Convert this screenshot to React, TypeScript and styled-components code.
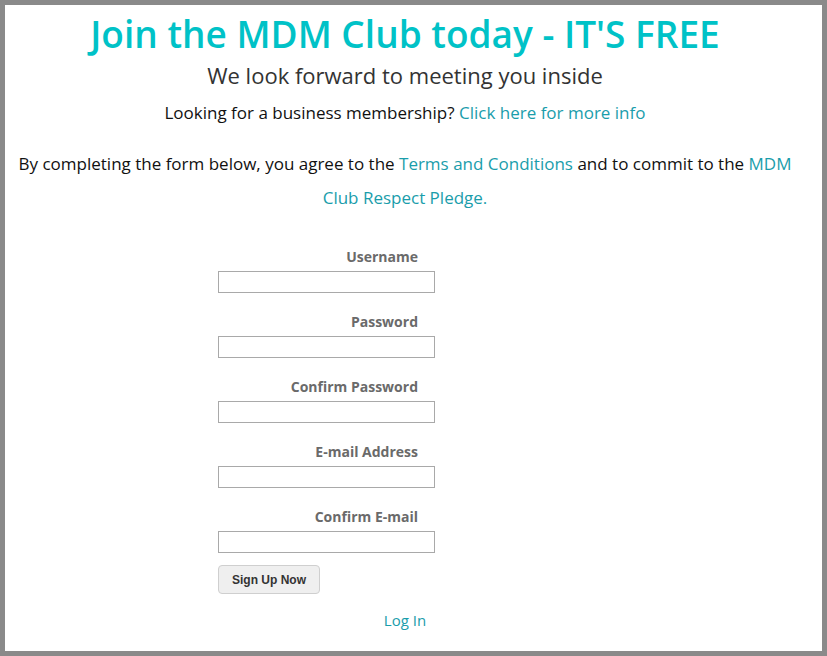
import React from "react";
import styled, { createGlobalStyle } from "styled-components";

const GlobalStyle = createGlobalStyle`
  html, body {
    margin: 0;
    padding: 0;
    background: #ffffff;
  }
  body {
    font-family: "Open Sans", "Liberation Sans", sans-serif;
  }
`;

const Frame = styled.div`
  box-sizing: border-box;
  width: 827px;
  height: 656px;
  border: 5px solid #8a8a8a;
  padding-right: 17px;
  background: #ffffff;
  overflow: hidden;
`;

const Header = styled.div`
  text-align: center;
`;

const Title = styled.h1`
  margin: 7px 0 0;
  font-size: 37px;
  line-height: 44px;
  font-weight: 600;
  color: #00c2c7;
`;

const Subtitle = styled.h2`
  margin: 4px 0 0;
  font-size: 22px;
  line-height: 30px;
  font-weight: 400;
  color: #333333;
`;

const Line = styled.p<{ $top: number }>`
  margin: ${(p) => p.$top}px 0 0;
  font-size: 17px;
  line-height: 34px;
  color: #111111;
`;

const Link = styled.a`
  color: #1a9dab;
  text-decoration: none;
`;

const Form = styled.form`
  display: flex;
  flex-direction: column;
  margin: 33px 0 0 213px;
  width: 217px;
`;

const Field = styled.div`
  display: flex;
  flex-direction: column;
  margin-bottom: 20px;
`;

const Label = styled.label`
  text-align: right;
  padding-right: 17px;
  font-size: 14px;
  line-height: 18px;
  font-weight: 700;
  color: #6a6a6a;
  margin-bottom: 5px;
`;

const Input = styled.input`
  box-sizing: border-box;
  width: 217px;
  height: 22px;
  margin: 0;
  border: 1px solid #a9a9a9;
  border-radius: 0;
  padding: 0 4px;
  background: #ffffff;
  outline: none;
`;

const Button = styled.button`
  align-self: flex-start;
  box-sizing: border-box;
  width: 102px;
  height: 29px;
  margin-top: -8px;
  border: 1px solid #cfcfcf;
  border-radius: 4px;
  background: #efefef;
  font-family: "Liberation Sans", Arial, sans-serif;
  font-size: 12px;
  font-weight: 700;
  color: #333333;
  padding: 0;
`;

const LoginRow = styled.div`
  margin-top: 16px;
  text-align: center;
  font-size: 15px;
  line-height: 20px;
`;

const fields = [
  { label: "Username", type: "text" },
  { label: "Password", type: "password" },
  { label: "Confirm Password", type: "password" },
  { label: "E-mail Address", type: "email" },
  { label: "Confirm E-mail", type: "email" },
];

const App: React.FC = () => {
  return (
    <>
      <GlobalStyle />
      <Frame>
        <Header>
          <Title>Join the MDM Club today - IT'S FREE</Title>
          <Subtitle>We look forward to meeting you inside</Subtitle>
          <Line $top={6}>
            Looking for a business membership? <Link href="#">Click here for more info</Link>
          </Line>
          <Line $top={17}>
            By completing the form below, you agree to the <Link href="#">Terms and Conditions</Link> and
            to commit to the <Link href="#">MDM Club Respect Pledge.</Link>
          </Line>
        </Header>
        <Form onSubmit={(e) => e.preventDefault()}>
          {fields.map((f) => (
            <Field key={f.label}>
              <Label>{f.label}</Label>
              <Input type={f.type} />
            </Field>
          ))}
          <Button type="submit">Sign Up Now</Button>
        </Form>
        <LoginRow>
          <Link href="#">Log In</Link>
        </LoginRow>
      </Frame>
    </>
  );
};

export default App;
